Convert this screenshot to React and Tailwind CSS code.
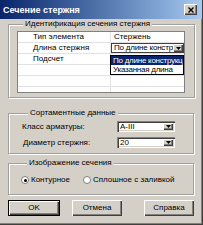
import React from 'react';

const raised = 'shadow-[inset_1px_1px_0_#fff,inset_-1px_-1px_0_#404040,inset_-2px_-2px_0_#808080]';
const sunken = 'shadow-[inset_1px_1px_0_#808080,inset_2px_2px_0_#404040,inset_-1px_-1px_0_#fff,inset_-2px_-2px_0_#d4d0c8]';

const Arrow = () => (
  <svg width="5" height="3" viewBox="0 0 5 3">
    <path d="M0 0h5L2.5 3z" fill="#000" />
  </svg>
);

const DropButton = () => (
  <div className={`w-[10px] h-full shrink-0 bg-[#d4d0c8] flex items-center justify-center ${raised}`}>
    <Arrow />
  </div>
);

const Combo = ({ value }) => (
  <div className={`w-[58px] h-[11px] bg-white flex p-[2px] ${sunken}`}>
    <span className="w-[44px] pl-[1px] leading-[7px] text-[8px] overflow-hidden whitespace-nowrap">{value}</span>
    <DropButton />
  </div>
);

const GroupBox = ({ title, className = '', children }) => (
  <fieldset className={`border border-[#a0a0a0] shadow-[1px_1px_0_#fff,inset_1px_1px_0_#fff] ${className}`}>
    <legend className="ml-[6px] px-[2px] bg-[#d4d0c8] leading-[10px]">{title}</legend>
    {children}
  </fieldset>
);

const Radio = ({ checked, label }) => (
  <label className="flex items-center gap-[2px]">
    <span className="w-[8px] h-[8px] rounded-full bg-white border border-[#808080] flex items-center justify-center">
      {checked && <span className="w-[3px] h-[3px] rounded-full bg-black" />}
    </span>
    <span>{label}</span>
  </label>
);

const Button = ({ children, primary, className = '' }) => (
  <button
    className={`h-[16px] bg-[#d4d0c8] flex items-center justify-center ${primary ? 'w-[52px] border border-black' : 'w-[50px]'} ${raised} ${className}`}
  >
    {children}
  </button>
);

const rows = [
  ['Тип элемента', 'Стержень'],
  ['Длина стержня', null],
  ['Подсчет', ''],
  ['', ''],
  ['', ''],
  ['', ''],
];

export default function App() {
  return (
    <div className="w-[203px] h-[225px] bg-[#d4d0c8] border-r border-b border-[#404040] shadow-[inset_-1px_-1px_0_#808080] text-[8px] leading-[10px] text-black font-['Liberation_Sans',Arial,sans-serif] overflow-hidden">
      {/* title bar */}
      <div className="h-[19px] flex items-center justify-between pl-[3px] pr-[5px] bg-gradient-to-r from-[#0a246a] to-[#a6caf0]">
        <span className="text-white font-bold text-[9px]">Сечение стержня</span>
        <div className={`w-[13px] h-[11px] bg-[#d4d0c8] flex items-center justify-center ${raised}`}>
          <svg width="6" height="6" viewBox="0 0 6 6">
            <path d="M0.5 0.5l5 5M5.5 0.5l-5 5" stroke="#000" strokeWidth="1.4" />
          </svg>
        </div>
      </div>

      <div className="px-[8px]">
        <GroupBox title="Идентификация сечения стержня" className="pl-[8px] pr-[9px] pb-[4px]">
          <div className="mt-[2px] h-[62px] bg-white border border-[#808080] relative">
            <div className="h-full overflow-hidden">
              {rows.map(([name, val], i) => (
                <div key={i} className="h-[11px] flex border-b border-[#e2e2e2]">
                  <div className="w-[93px] shrink-0 pl-[15px] leading-[10px] border-r border-[#e2e2e2]">{name}</div>
                  {val === null ? (
                    <div className="w-[73px] h-[10px] flex bg-white border border-[#404040]">
                      <span className="w-[61px] pl-[2px] leading-[8px] tracking-[-0.2px] overflow-hidden whitespace-nowrap">По длине конструкции</span>
                      <DropButton />
                    </div>
                  ) : (
                    <div className="w-[73px] leading-[10px] pl-[3px] whitespace-nowrap overflow-hidden">{val}</div>
                  )}
                </div>
              ))}
            </div>
            <div className="absolute left-[92px] w-[74px] top-[23px] bg-white border border-black tracking-[-0.25px]">
              <div className="h-[9px] leading-[9px] pl-[2px] bg-[#0a246a] text-white whitespace-nowrap overflow-hidden">По длине конструкции</div>
              <div className="h-[9px] leading-[9px] pl-[2px] whitespace-nowrap overflow-hidden">Указанная длина</div>
            </div>
          </div>
        </GroupBox>

        <GroupBox title="Сортаментные данные" className="mt-[10px] pl-[13px] pr-[18px] pb-[5px]">
          <div className="mt-[3px] flex flex-col gap-[5px]">
            <div className="flex items-center justify-between">
              <span>Класс арматуры:</span>
              <Combo value="A-III" />
            </div>
            <div className="flex items-center justify-between">
              <span className="pl-[1px]">Диаметр стержня:</span>
              <Combo value="20" />
            </div>
          </div>
        </GroupBox>

        <GroupBox title="Изображение сечения" className="mt-[4px] pl-[12px] pb-[9px]">
          <div className="mt-[7px] h-[10px] flex items-center gap-[13px]">
            <Radio checked label="Контурное" />
            <Radio label="Сплошное с заливкой" />
          </div>
        </GroupBox>

        <div className="mt-[5px] flex">
          <Button primary>OK</Button>
          <Button className="ml-[12px]">Отмена</Button>
          <Button className="ml-[22px]">Справка</Button>
        </div>
      </div>
    </div>
  );
}
